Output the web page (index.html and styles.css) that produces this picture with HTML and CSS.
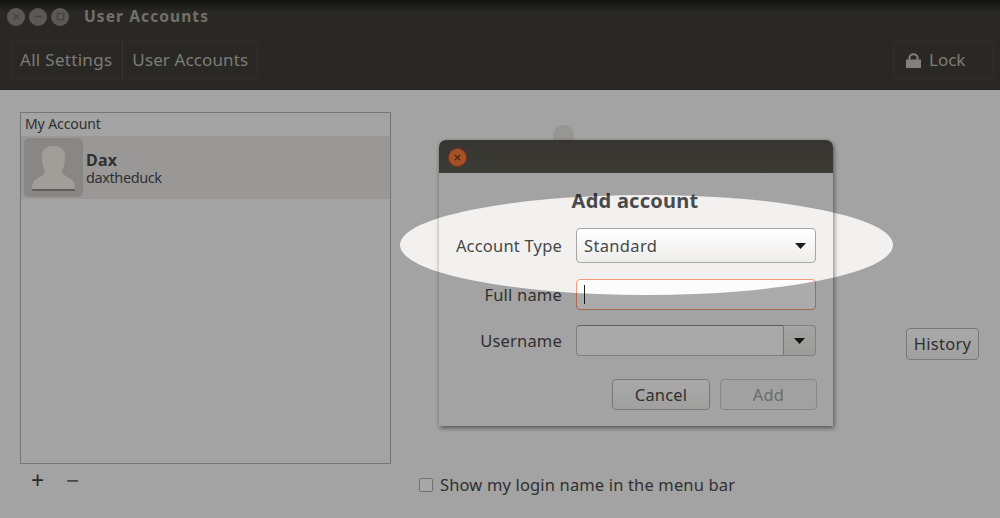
FILE: index.html
```html
<!DOCTYPE html>
<html lang="en">
<head>
<meta charset="utf-8">
<title>User Accounts</title>
<link rel="stylesheet" href="styles.css">
</head>
<body>
<div class="window">
  <header class="titlebar">
    <div class="wm-buttons">
      <span class="wm-btn"><svg viewBox="0 0 10 10" class="wm-glyph"><path d="M2 2l6 6M8 2l-6 6"/></svg></span>
      <span class="wm-btn"><svg viewBox="0 0 10 10" class="wm-glyph"><path d="M1 5h8"/></svg></span>
      <span class="wm-btn"><svg viewBox="0 0 10 10" class="wm-glyph"><rect x="1.5" y="1.5" width="7" height="7"/></svg></span>
    </div>
    <span class="window-title">User Accounts</span>
  </header>
  <div class="toolbar">
    <nav class="crumbs">
      <span class="crumb">All Settings</span>
      <span class="crumb">User Accounts</span>
    </nav>
    <button class="lock-btn">
      <svg class="lock-icon" viewBox="0 0 15 15"><path class="lock-body" d="M0 6.500h15V15H0z"/><path class="lock-bow" d="M3.500 7V4.500a4 3.200 0 0 1 8 0V7"/></svg>
      <span>Lock</span>
    </button>
  </div>
  <main class="content">
    <section class="accounts">
      <div class="account-list">
        <div class="list-heading">My Account</div>
        <div class="account-row">
          <div class="avatar">
            <svg viewBox="0 0 59 59" class="avatar-svg">
              <path class="person" d="M18 18c0-7 5-10 11.500-10s11.500 3 11.500 10c0 4-.5 7-1 10-.4 2-2 3-2 5 0 3 4 5 7 7 4 2 6 4 6 12H8c0-8 2-10 6-12 3-2 7-4 7-7 0-2-1.600-3-2-5-.5-3-1-6-1-10z"/>
              <rect class="person-line" x="8" y="51" width="43" height="2"/>
            </svg>
          </div>
          <div class="account-text">
            <div class="account-name">Dax</div>
            <div class="account-login">daxtheduck</div>
          </div>
        </div>
      </div>
      <div class="list-tools">
        <span class="tool tool-add">+</span>
        <span class="tool tool-remove">−</span>
      </div>
    </section>
    <section class="details">
      <div class="detail-main">
        <div class="detail-photo"></div>
        <button class="btn history-btn">History</button>
      </div>
      <label class="login-check">
        <span class="checkbox"></span>
        <span>Show my login name in the menu bar</span>
      </label>
    </section>
  </main>
</div>

<div class="dialog">
  <div class="dialog-bar">
    <span class="dialog-close"><svg viewBox="0 0 10 10" class="close-glyph"><path d="M2 2l6 6M8 2l-6 6"/></svg></span>
  </div>
  <div class="dialog-body">
    <h1 class="dialog-title">Add account</h1>
    <div class="form">
      <div class="form-row row-type">
        <span class="form-label">Account Type</span>
        <div class="select">
          <span>Standard</span>
          <svg class="arrow" viewBox="0 0 11 6"><path d="M0 0h11L5.500 6z"/></svg>
        </div>
      </div>
      <div class="form-row row-name">
        <span class="form-label">Full name</span>
        <div class="entry"><span class="caret"></span></div>
      </div>
      <div class="form-row row-user">
        <span class="form-label">Username</span>
        <div class="combo">
          <div class="combo-input"></div>
          <div class="combo-btn"><svg class="arrow" viewBox="0 0 11 6"><path d="M0 0h11L5.500 6z"/></svg></div>
        </div>
      </div>
    </div>
    <div class="dialog-actions">
      <button class="btn action-btn">Cancel</button>
      <button class="btn action-btn disabled">Add</button>
    </div>
  </div>
</div>

<div class="spotlight"></div>
</body>
</html>
```

FILE: styles.css
```css
* { box-sizing: border-box; }
html, body { margin: 0; height: 518px; overflow: hidden; }
body {
  position: relative;
  width: 1000px;
  background: #f2f1f0;
  color: #484848;
  font: 16px/1.2 "Noto Sans", sans-serif;
}
button { font: inherit; color: inherit; padding: 0; }

.window { display: flex; flex-direction: column; height: 518px; }

.titlebar {
  height: 34px;
  display: flex;
  align-items: center;
  padding: 0 0 1px 7px;
  background: linear-gradient(#1e1e1c 0, #232320 4px, #3d3c37 12px, #3d3c37 100%);
}
.wm-buttons { display: flex; gap: 4px; }
.wm-btn {
  width: 18px; height: 18px; border-radius: 50%;
  background: #87847e;
  display: flex; align-items: center; justify-content: center;
}
.wm-glyph { width: 9px; height: 9px; fill: none; stroke: #65635e; stroke-width: 1.5; }
.window-title {
  margin-left: 15px;
  font-weight: 700;
  font-size: 15.500px;
  letter-spacing: 1.1px;
  color: #a8a59d;
}

.toolbar {
  height: 56px;
  display: flex;
  justify-content: space-between;
  padding: 7px 6px 10px 12px;
  background: #3d3c37;
  border-bottom: 1px solid #33322e;
}
.crumbs {
  display: flex;
  border: 1px solid #474641;
  border-radius: 4px;
}
.crumb {
  display: flex; align-items: center;
  padding: 0 9px;
  font-size: 17px;
  letter-spacing: .12px;
  color: #b9b6ae;
}
.crumb:first-child { padding: 0 10px 0 7px; letter-spacing: .3px; }
.crumb + .crumb { border-left: 1px solid #54524d; }
.lock-btn {
  width: 101px;
  display: flex; align-items: center;
  gap: 8px;
  padding-left: 12px;
  background: transparent;
  border: 1px solid #474641;
  border-radius: 4px;
  font-size: 17px;
  color: #b9b6ae;
}
.lock-icon { width: 15px; height: 15px; }
.lock-body { fill: #c2bfb8; }
.lock-bow { fill: none; stroke: #c2bfb8; stroke-width: 2; }

.content { flex: 1; display: flex; background: #f2f1f0; }

.accounts { width: 371px; margin: 22px 0 0 20px; }
.account-list {
  height: 352px;
  border: 1px solid #b0aea9;
  background: #f2f1f0;
}
.list-heading {
  height: 23px;
  padding: 3px 0 0 4px;
  font-size: 14px;
  letter-spacing: -.1px;
}
.account-row {
  height: 63px;
  display: flex; align-items: center;
  padding: 0 0 0 3px;
  gap: 3px;
  background: #e2e0de;
}
.avatar {
  width: 59px; height: 59px;
  border-radius: 5px;
  background: #c9c7c4;
}
.avatar-svg { display: block; width: 59px; height: 59px; }
.person { fill: #ece9e0; }
.person-line { fill: #8c8a84; }
.account-text { padding-top: 2px; }
.account-name { font-weight: 700; font-size: 16px; line-height: 17px; letter-spacing: .2px; }
.account-login { font-size: 14.500px; line-height: 17px; letter-spacing: -.4px; }

.list-tools { display: flex; padding: 4px 0 0; }
.tool { width: 35px; text-align: center; font-size: 23px; line-height: 24px; color: #404040; }
.tool-remove { color: #6c6c6c; }

.details {
  flex: 1;
  padding: 0 21px 23px 28px;
  display: flex; flex-direction: column;
}
.detail-main { flex: 1; display: flex; justify-content: space-between; }
.detail-photo {
  width: 21px; height: 40px;
  margin: 35px 0 0 134px;
  border-radius: 10px;
  background: #e0ded8;
}
.btn {
  display: flex; align-items: center; justify-content: center;
  border: 1px solid #b4b2ae;
  border-radius: 4px;
  background: linear-gradient(#fafafa, #ecebea);
  font-size: 16.500px;
}
.history-btn { width: 73px; height: 32px; margin-top: 238px; letter-spacing: .3px; }

.login-check { display: flex; align-items: center; gap: 7px; font-size: 16.500px; letter-spacing: .15px; }
.checkbox {
  width: 14px; height: 14px;
  border: 1px solid #a8a6a2;
  border-radius: 2px;
  background: #f8f8f8;
}

.dialog {
  position: absolute;
  left: 439px; top: 140px;
  width: 394px; height: 286px;
  border-radius: 7px 7px 0 0;
  background: #f2f1f0;
  box-shadow: 1px 2px 5px rgba(0,0,0,.5);
}
.dialog-bar {
  height: 33px;
  padding: 8px 0 0 9px;
  border-radius: 7px 7px 0 0;
  background: linear-gradient(#504e48, #595750);
}
.dialog-close {
  display: flex; align-items: center; justify-content: center;
  width: 19px; height: 19px; border-radius: 50%;
  background: #f57a3d;
  border: 1px solid #b84f22;
}
.close-glyph { width: 9px; height: 9px; fill: none; stroke: #7a3315; stroke-width: 1.4; }
.dialog-body { padding: 16px 17px 0 15px; }
.dialog-title {
  margin: 0;
  height: 24px;
  line-height: 24px;
  text-align: center;
  font-size: 20px;
  font-weight: 700;
  letter-spacing: .25px;
  color: #4a4a4a;
}
.form { margin-top: 15px; display: flex; flex-direction: column; gap: 15px; }
.form-row { display: flex; align-items: center; gap: 14px; }
.row-type { height: 35px; margin-bottom: 1px; }
.row-name { height: 31px; }
.row-user { height: 31px; }
.form-label { width: 108px; text-align: right; white-space: nowrap; font-size: 16.500px; letter-spacing: .2px; }
.select {
  flex: 1; height: 100%;
  display: flex; align-items: center; justify-content: space-between;
  padding: 0 9px 0 7px;
  border: 1px solid #a9a7a3;
  border-radius: 4px;
  background: linear-gradient(#ffffff, #eeedec);
  font-size: 16.500px;
  letter-spacing: .35px;
}
.arrow { display: block; width: 11px; height: 6px; fill: #1c1c1c; }
.entry {
  flex: 1; height: 100%;
  display: flex; align-items: center;
  padding-left: 7px;
  border: 1px solid #f49a7a;
  border-radius: 4px;
  background: #fcfcfc;
}
.caret { width: 1px; height: 19px; background: #222; }
.combo { flex: 1; height: 100%; display: flex; }
.combo-input {
  flex: 1;
  border: 1px solid #bdbbb7;
  border-top-color: #908e8a;
  border-right: 0;
  border-radius: 4px 0 0 4px;
  background: #fafafa;
}
.combo-btn {
  width: 33px;
  display: flex; align-items: center; justify-content: center;
  border: 1px solid #c0beba;
  border-left-color: #b0aeaa;
  border-radius: 0 4px 4px 0;
  background: linear-gradient(#f4f3f2, #e6e5e3);
}
.dialog-actions { margin: 23px -1px 0 0; display: flex; gap: 10px; justify-content: flex-end; }
.action-btn { width: 98px; height: 31px; letter-spacing: .15px; }
.action-btn.disabled { width: 97px; color: #9d9d9d; background: #efeeed; border-color: #c9c7c4; }

.spotlight {
  position: absolute;
  left: 400px; top: 195px;
  width: 493px; height: 100px;
  border-radius: 50%;
  box-shadow: 0 0 0 1200px rgba(0,0,0,.32);
  pointer-events: none;
}
```
